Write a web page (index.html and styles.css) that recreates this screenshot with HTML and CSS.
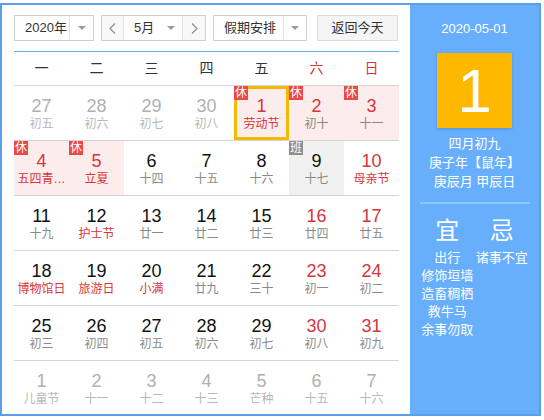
FILE: index.html
```html
<!DOCTYPE html>
<html lang="zh-CN">
<head>
<meta charset="utf-8">
<title>万年历</title>
<link rel="stylesheet" href="styles.css">
</head>
<body>
<div class="cal">
  <div class="main">
    <div class="bar">
      <div class="box year">
        <span class="val">2020年</span>
        <span class="drop"><i class="tri"></i></span>
      </div>
      <div class="box month">
        <span class="nav prev"><svg width="7" height="11" viewBox="0 0 7 11"><polyline points="6,0.5 1,5.5 6,10.5" fill="none" stroke="#8a8a8a" stroke-width="1.1"/></svg></span>
        <span class="mid"><span class="mval">5月</span><i class="tri"></i></span>
        <span class="nav next"><svg width="7" height="11" viewBox="0 0 7 11"><polyline points="1,0.5 6,5.5 1,10.5" fill="none" stroke="#8a8a8a" stroke-width="1.1"/></svg></span>
      </div>
      <div class="box holi">
        <span class="val">假期安排</span>
        <span class="drop"><i class="tri"></i></span>
      </div>
      <div class="btn">返回今天</div>
    </div>
    <div class="line"></div>
    <div class="head">
      <span>一</span><span>二</span><span>三</span><span>四</span><span>五</span><span class="red">六</span><span class="red">日</span>
    </div>
    <div class="row">
      <div class="cell other"><span class="num">27</span><span class="lun">初五</span></div>
      <div class="cell other"><span class="num">28</span><span class="lun">初六</span></div>
      <div class="cell other"><span class="num">29</span><span class="lun">初七</span></div>
      <div class="cell other"><span class="num">30</span><span class="lun">初八</span></div>
      <div class="cell hol wk fest sel"><i class="tag">休</i><span class="num">1</span><span class="lun">劳动节</span></div>
      <div class="cell hol wk"><i class="tag">休</i><span class="num">2</span><span class="lun">初十</span></div>
      <div class="cell hol wk"><i class="tag">休</i><span class="num">3</span><span class="lun">十一</span></div>
    </div>
    <div class="row">
      <div class="cell hol wk fest"><i class="tag">休</i><span class="num">4</span><span class="lun" title="五四青年节">五四青…</span></div>
      <div class="cell hol wk fest"><i class="tag">休</i><span class="num">5</span><span class="lun">立夏</span></div>
      <div class="cell"><span class="num">6</span><span class="lun">十四</span></div>
      <div class="cell"><span class="num">7</span><span class="lun">十五</span></div>
      <div class="cell"><span class="num">8</span><span class="lun">十六</span></div>
      <div class="cell work"><i class="tag gray">班</i><span class="num">9</span><span class="lun">十七</span></div>
      <div class="cell wk fest"><span class="num">10</span><span class="lun">母亲节</span></div>
    </div>
    <div class="row">
      <div class="cell"><span class="num">11</span><span class="lun">十九</span></div>
      <div class="cell fest"><span class="num">12</span><span class="lun">护士节</span></div>
      <div class="cell"><span class="num">13</span><span class="lun">廿一</span></div>
      <div class="cell"><span class="num">14</span><span class="lun">廿二</span></div>
      <div class="cell"><span class="num">15</span><span class="lun">廿三</span></div>
      <div class="cell wk"><span class="num">16</span><span class="lun">廿四</span></div>
      <div class="cell wk"><span class="num">17</span><span class="lun">廿五</span></div>
    </div>
    <div class="row">
      <div class="cell fest"><span class="num">18</span><span class="lun">博物馆日</span></div>
      <div class="cell fest"><span class="num">19</span><span class="lun">旅游日</span></div>
      <div class="cell fest"><span class="num">20</span><span class="lun">小满</span></div>
      <div class="cell"><span class="num">21</span><span class="lun">廿九</span></div>
      <div class="cell"><span class="num">22</span><span class="lun">三十</span></div>
      <div class="cell wk"><span class="num">23</span><span class="lun">初一</span></div>
      <div class="cell wk"><span class="num">24</span><span class="lun">初二</span></div>
    </div>
    <div class="row">
      <div class="cell"><span class="num">25</span><span class="lun">初三</span></div>
      <div class="cell"><span class="num">26</span><span class="lun">初四</span></div>
      <div class="cell"><span class="num">27</span><span class="lun">初五</span></div>
      <div class="cell"><span class="num">28</span><span class="lun">初六</span></div>
      <div class="cell"><span class="num">29</span><span class="lun">初七</span></div>
      <div class="cell wk"><span class="num">30</span><span class="lun">初八</span></div>
      <div class="cell wk"><span class="num">31</span><span class="lun">初九</span></div>
    </div>
    <div class="row last">
      <div class="cell other"><span class="num">1</span><span class="lun">儿童节</span></div>
      <div class="cell other"><span class="num">2</span><span class="lun">十一</span></div>
      <div class="cell other"><span class="num">3</span><span class="lun">十二</span></div>
      <div class="cell other"><span class="num">4</span><span class="lun">十三</span></div>
      <div class="cell other"><span class="num">5</span><span class="lun">芒种</span></div>
      <div class="cell other"><span class="num">6</span><span class="lun">十五</span></div>
      <div class="cell other"><span class="num">7</span><span class="lun">十六</span></div>
    </div>
  </div>
  <div class="side">
    <div class="date">2020-05-01</div>
    <div class="big">1</div>
    <div class="info">
      <div>四月初九</div>
      <div>庚子年【鼠年】</div>
      <div>庚辰月 甲辰日</div>
    </div>
    <div class="sep"></div>
    <div class="yj">
      <span>宜</span><span>忌</span>
    </div>
    <div class="lists">
      <div class="col">
        <div>出行</div>
        <div>修饰垣墙</div>
        <div>造畜稠栖</div>
        <div>教牛马</div>
        <div>余事勿取</div>
      </div>
      <div class="col">
        <div>诸事不宜</div>
      </div>
    </div>
  </div>
</div>
</body>
</html>
```
FILE: styles.css
```css
* { box-sizing: border-box; }
body {
  margin: 0;
  background: #fff;
  font-family: "Liberation Sans", "Noto Sans CJK SC", sans-serif;
  color: #333;
}
.cal {
  display: flex;
  margin-top: 3px;
  width: 541px;
  border: 2px solid #5c9fe8;
}
.main {
  width: 408px;
  padding: 10px 11px 0 12px;
  background: #fff;
}
.bar {
  display: flex;
  height: 26px;
  gap: 7px;
  font-size: 13px;
}
.box {
  display: flex;
  height: 26px;
  border: 1px solid #cfcfcf;
  background: #fff;
}
.year { width: 80px; }
.year .val { width: 54px; }
.holi { width: 94px; }
.holi .val { width: 69px; }
.val {
  padding-left: 10px;
  line-height: 24px;
  white-space: nowrap;
}
.drop {
  flex: 1;
  border-left: 1px solid #e2e2e2;
  display: flex;
  align-items: center;
  justify-content: center;
}
.tri {
  display: block;
  width: 0;
  height: 0;
  border-left: 4px solid transparent;
  border-right: 4px solid transparent;
  border-top: 4px solid #9b9b9b;
}
.month { width: 105px; }
.nav {
  width: 22px;
  background: #f8f8f8;
  display: flex;
  align-items: center;
  justify-content: center;
}
.prev { border-right: 1px solid #e2e2e2; }
.next { border-left: 1px solid #e2e2e2; width: 23px; }
.mid {
  flex: 1;
  display: flex;
  align-items: center;
  padding-left: 10px;
}
.mval { width: 33px; line-height: 24px; }
.btn {
  width: 81px;
  margin-left: 3px;
  height: 26px;
  border: 1px solid #dcdcdc;
  background: #f5f5f5;
  text-align: center;
  line-height: 24px;
}
.line {
  margin-top: 10px;
  border-top: 1px solid #65a9f0;
}
.head {
  display: grid;
  grid-template-columns: repeat(7, 55px);
  height: 33px;
  line-height: 33px;
  font-size: 14px;
  text-align: center;
  color: #333;
}
.head .red { color: #d8343c; }
.row {
  display: grid;
  grid-template-columns: repeat(7, 55px);
  height: 55px;
  border-top: 1px solid #d4d4d4;
}
.row.last { height: 54px; }
.cell {
  position: relative;
  padding-top: 10px;
  text-align: center;
  overflow: hidden;
}
.num {
  display: block;
  font-size: 18px;
  line-height: 20px;
  color: #111;
}
.lun {
  display: block;
  padding: 0 2px;
  font-size: 12px;
  line-height: 16px;
  color: #8a8a8a;
  white-space: nowrap;
}
.wk .num { color: #d8343c; }
.fest .lun { color: #d8343c; }
.other .num { color: #b0b0b0; }
.other .lun { color: #b8b8b8; }
.hol { background: #fdecec; }
.work { background: #f1f1f1; }
.sel { box-shadow: inset 0 0 0 3px #f6b800; }
.tag {
  position: absolute;
  left: 0;
  top: 0;
  width: 14px;
  height: 14px;
  background: #ee4747;
  color: #fff;
  font-style: normal;
  font-size: 12px;
  line-height: 14px;
  text-align: center;
}
.tag.gray { background: #8e8e8e; }
.side {
  width: 129px;
  background: #67affc;
  color: #fff;
  text-align: center;
  padding: 15px 10px 0;
}
.date {
  font-size: 13px;
  line-height: 18px;
}
.big {
  width: 75px;
  height: 75px;
  margin: 15px auto 0;
  background: #ffb800;
  box-shadow: 0 1px 3px rgba(0, 0, 0, 0.18);
  font-size: 62px;
  line-height: 75px;
}
.info {
  margin-top: 6px;
  font-size: 13px;
  line-height: 19px;
}
.sep {
  width: 110px;
  margin: 11px auto 0;
  border-top: 2px solid #8ec5fe;
}
.yj {
  display: flex;
  margin-top: 12px;
  font-size: 24px;
  line-height: 30px;
}
.yj span { flex: 1; }
.lists {
  display: flex;
  margin-top: 3px;
  font-size: 13px;
  line-height: 18px;
}
.col { flex: 1; white-space: nowrap; }
```
